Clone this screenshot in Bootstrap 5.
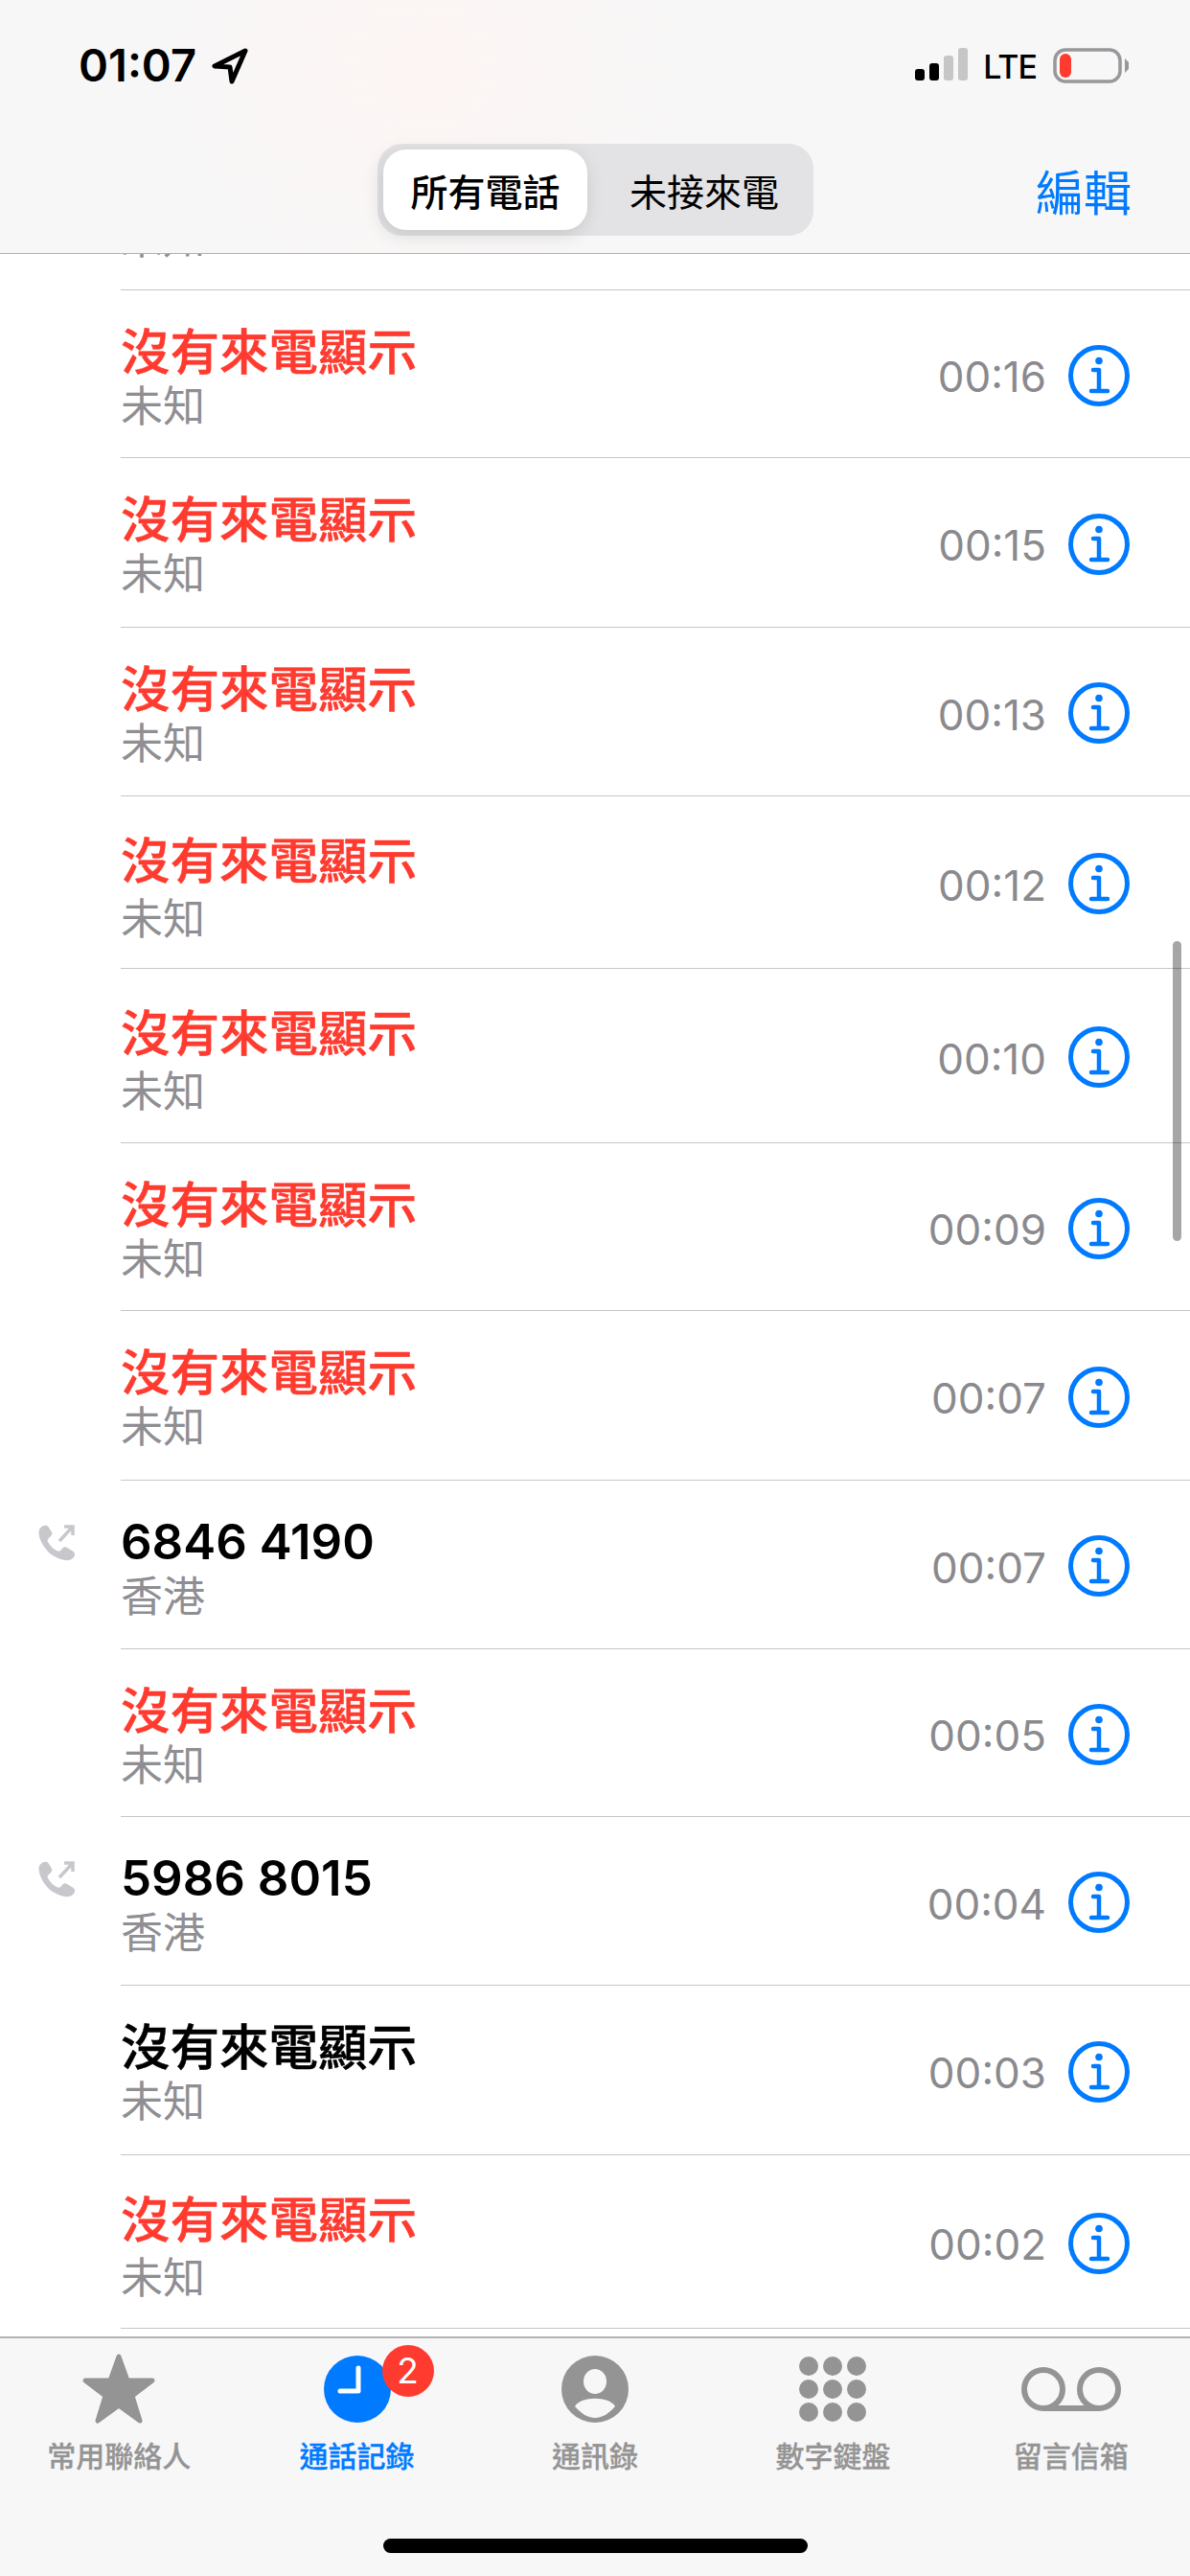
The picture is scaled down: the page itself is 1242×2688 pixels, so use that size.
<!DOCTYPE html>
<html lang="zh-Hant">
<head>
  <meta charset="UTF-8">
  <title>通話記錄</title>
  <link href="https://cdn.jsdelivr.net/npm/bootstrap@5.3.0/dist/css/bootstrap.min.css" rel="stylesheet">
  <style>
    html, body {
      width: 1242px;
      height: 2688px;
      overflow: hidden;
    }

    body {
      background: #fff;
      font-family: Inter, "Noto Sans CJK TC", sans-serif;
      color: #000;
    }

    .phone-screen {
      height: 2688px;
    }

    /* top bar */
    .top-bar {
      height: 265px;
      flex: none;
      background: radial-gradient(ellipse 300px 260px at 440px 70px, #fdf5f4, #f7f7f7 100%);
      border-bottom: 1px solid #b1b1b1;
    }

    .status-row {
      height: 150px;
      padding: 50px 63px 0 82px;
    }

    .clock-text {
      font-size: 47px;
      font-weight: 600;
      line-height: 36px;
    }

    .lte-text {
      font-size: 34px;
      font-weight: 500;
      line-height: 30px;
      letter-spacing: -1px;
      margin: 5px 17px 0 16px;
    }

    .seg-row {
      display: grid;
      grid-template-columns: 1fr auto 1fr;
      padding: 0 61px 0 62px;
    }

    .seg-box {
      width: 455px;
      height: 96px;
      padding: 6px;
      background: #e3e3e5;
      border-radius: 26px;
      font-size: 39px;
      font-family: "Noto Sans CJK TC", sans-serif;
    }

    .seg-item {
      height: 84px;
      color: #000;
      line-height: 84px;
      text-align: center;
    }

    .seg-on {
      width: 213px;
      background: #fff;
      border-radius: 24px;
      font-weight: 500;
      box-shadow: -2px 5px 20px rgba(0, 0, 0, .13);
    }

    .seg-off {
      flex: 1;
      padding-left: 14px;
    }

    .edit-link {
      justify-self: end;
      align-self: center;
      color: #007aff;
      font-family: "Noto Sans CJK TC", sans-serif;
      font-size: 50px;
      text-decoration: none;
      line-height: 60px;
    }

    /* call list */
    .call-list {
      flex: 1;
      min-height: 0;
      overflow: hidden;
    }

    .call-item {
      background: #fff;
      color: #000;
      border: 0;
      border-radius: 0 !important;
      padding: 0;
    }

    .call-item:first-child {
      margin-top: -137px;
    }

    .dir-slot {
      width: 126px;
      flex: none;
      padding: 46px 0 0 40px;
    }

    .call-body {
      border-bottom: 1px solid #c6c6c8;
      padding: 3px 63px 0 0;
      min-width: 0;
    }

    .call-text {
      margin-top: -3px;
    }

    .call-title {
      font-size: 51.5px;
      font-weight: 500;
      line-height: 60px;
      height: 91px;
      padding-top: 31px;
      -webkit-text-stroke: .5px currentColor;
      font-family: "Noto Sans CJK TC", sans-serif;
    }

    .call-title.is-missed {
      color: #ff3b30;
    }

    .call-title.is-number {
      font-family: Inter, sans-serif;
      font-weight: 600;
      font-size: 51px;
      padding-top: 34px;
      -webkit-text-stroke: 0;
    }

    .call-sub {
      font-size: 44px;
      line-height: 50px;
      margin-top: 2px;
      color: #8e8e93;
      font-family: "Noto Sans CJK TC", sans-serif;
    }

    .call-item.is-tall .call-title {
      height: 94px;
      padding-top: 34px;
    }

    .call-item.is-tall .call-sub {
      margin-top: 6px;
    }

    .call-time {
      font-size: 44px;
      line-height: 64px;
      padding-top: 3px;
      color: #8a8a8e;
      margin-right: 23px;
    }

    .scroll-thumb {
      top: 717px;
      right: 9px;
      width: 9px;
      height: 313px;
      border-radius: 5px;
      background: rgba(0, 0, 0, .35);
    }

    /* tab bar */
    .tab-bar {
      height: 250px;
      flex: none;
      background: #f7f7f8;
      border-top: 2px solid #b1b1b1;
    }

    .tab-col {
      padding-top: 14px;
      text-align: center;
      color: #949494;
    }

    .tab-col.is-active {
      color: #007aff;
    }

    .tab-icon {
      height: 78px;
    }

    .tab-label {
      font-size: 30px;
      font-weight: 500;
      line-height: 40px;
      margin-top: 9px;
      -webkit-text-stroke: .3px currentColor;
      font-family: "Noto Sans CJK TC", sans-serif;
    }

    .missed-count {
      top: -7px;
      left: 61px;
      width: 54px;
      height: 54px;
      border-radius: 50%;
      background: #ff3b30;
      color: #fff;
      font-size: 37px;
      line-height: 54px;
      text-align: center;
    }

    .home-bar {
      width: 443px;
      height: 15px;
      margin: 0 auto 24px;
      background: #000;
      border-radius: 8px;
    }
  </style>
</head>
<body>
  <div class="phone-screen d-flex flex-column">

    <header class="top-bar">
      <div class="status-row d-flex justify-content-between align-items-start">
        <div class="d-flex align-items-start">
          <span class="clock-text">01:07</span>
          <svg class="ms-3" width="38" height="38" viewBox="0 0 38 38">
            <path d="M35 3 L3 19 L19 20 L21 35 Z" fill="none" stroke="#000" stroke-width="5" stroke-linejoin="round"/>
          </svg>
        </div>
        <div class="d-flex align-items-start">
          <svg width="55" height="36" viewBox="0 0 55 36">
            <rect x="0" y="22" width="10" height="12" rx="3" fill="#000"/>
            <rect x="15" y="16" width="10" height="18" rx="3" fill="#000"/>
            <rect x="30" y="8" width="10" height="26" rx="3" fill="#c6c6c6"/>
            <rect x="45" y="0" width="10" height="34" rx="3" fill="#c6c6c6"/>
          </svg>
          <span class="lte-text">LTE</span>
          <svg width="80" height="38" viewBox="0 0 80 38">
            <rect x="2" y="2" width="68" height="33" rx="11" fill="none" stroke="#98989c" stroke-width="3.5"/>
            <rect x="7" y="6" width="12" height="25" rx="6" fill="#ff3b30"/>
            <path d="M75 11 L79 15 V22 L75 26 Z" fill="#98989c"/>
          </svg>
        </div>
      </div>
      <div class="seg-row">
        <div></div>
        <div class="seg-box d-flex">
          <div class="seg-item seg-on">所有電話</div>
          <div class="seg-item seg-off">未接來電</div>
        </div>
        <a class="edit-link" href="#">編輯</a>
      </div>
    </header>

    <div class="call-list position-relative">
      <ul class="list-group" id="calls"></ul>
      <div class="scroll-thumb position-absolute"></div>
    </div>

    <nav class="tab-bar d-flex flex-column">
      <div class="row g-0 flex-grow-1">
        <div class="col tab-col">
          <div class="tab-icon">
            <svg width="78" height="78" viewBox="0 0 78 78">
              <path d="M39 5 L48 30 L74 30 L53 46 L61 72 L39 56 L17 72 L25 46 L4 30 L30 30 Z" fill="#949494" stroke="#949494" stroke-width="5" stroke-linejoin="round"/>
            </svg>
          </div>
          <div class="tab-label">常用聯絡人</div>
        </div>
        <div class="col tab-col is-active">
          <div class="tab-icon d-flex justify-content-center">
            <div class="position-relative">
              <svg width="70" height="78" viewBox="0 0 70 78">
                <circle cx="35" cy="39" r="35" fill="#007aff"/>
                <path d="M36 17 V41 H17" fill="none" stroke="#fff" stroke-width="5" stroke-linecap="round" stroke-linejoin="round"/>
              </svg>
              <span class="missed-count position-absolute">2</span>
            </div>
          </div>
          <div class="tab-label">通話記錄</div>
        </div>
        <div class="col tab-col">
          <div class="tab-icon">
            <svg width="70" height="78" viewBox="0 0 70 78">
              <circle cx="35" cy="39" r="35" fill="#949494"/>
              <ellipse cx="35" cy="31" rx="12" ry="13" fill="#f7f7f8"/>
              <path d="M14 57 C20 46 50 46 56 57 C50 64 43 69 35 69 C27 69 20 64 14 57 Z" fill="#f7f7f8"/>
            </svg>
          </div>
          <div class="tab-label">通訊錄</div>
        </div>
        <div class="col tab-col">
          <div class="tab-icon">
            <svg width="72" height="78" viewBox="0 0 72 78">
              <g fill="#949494">
                <circle cx="11" cy="15" r="10"/><circle cx="36" cy="15" r="10"/><circle cx="61" cy="15" r="10"/>
                <circle cx="11" cy="39" r="10"/><circle cx="36" cy="39" r="10"/><circle cx="61" cy="39" r="10"/>
                <circle cx="11" cy="63" r="10"/><circle cx="36" cy="63" r="10"/><circle cx="61" cy="63" r="10"/>
              </g>
            </svg>
          </div>
          <div class="tab-label">數字鍵盤</div>
        </div>
        <div class="col tab-col">
          <div class="tab-icon">
            <svg width="104" height="78" viewBox="0 0 104 78">
              <g fill="none" stroke="#949494" stroke-width="6">
                <circle cx="23" cy="39" r="20"/>
                <circle cx="81" cy="39" r="20"/>
                <path d="M23 59 H81"/>
              </g>
            </svg>
          </div>
          <div class="tab-label">留言信箱</div>
        </div>
      </div>
      <div class="home-bar"></div>
    </nav>
  </div>

  <script>
    const unknown = "沒有來電顯示";
    // first row is scrolled under the top bar, only the bottom of its subtitle shows
    const calls = [
      { h: 175, title: "", sub: "未知", time: "" },
      { h: 175, title: unknown, sub: "未知", time: "00:16", missed: true },
      { h: 177, title: unknown, sub: "未知", time: "00:15", missed: true },
      { h: 176, title: unknown, sub: "未知", time: "00:13", missed: true },
      { h: 180, title: unknown, sub: "未知", time: "00:12", missed: true },
      { h: 182, title: unknown, sub: "未知", time: "00:10", missed: true },
      { h: 175, title: unknown, sub: "未知", time: "00:09", missed: true },
      { h: 177, title: unknown, sub: "未知", time: "00:07", missed: true },
      { h: 176, title: "6846 4190", sub: "香港", time: "00:07", out: true },
      { h: 175, title: unknown, sub: "未知", time: "00:05", missed: true },
      { h: 176, title: "5986 8015", sub: "香港", time: "00:04", out: true },
      { h: 177, title: unknown, sub: "未知", time: "00:03" },
      { h: 181, title: unknown, sub: "未知", time: "00:02", missed: true }
    ];

    const outIcon = `
      <svg width="38" height="38" viewBox="0 0 38 38">
        <path d="M9 1 C7 0 3 1 1 5 C-1 12 4 22 11 29 C17 34 26 38 32 37 C36 36 38 33 38 31 C38 29 37 28 35 27 L30 24 C28 23 26 23 25 25 L23 27 C22 28 21 28 19 27 C15 25 12 21 10 18 C9 16 10 15 11 14 L13 12 C14 11 15 9 14 8 L11 3 C10 2 10 1 9 1 Z" fill="#c7c7cc"/>
        <path d="M22 17 L36 2 M27 2 H36 V11" fill="none" stroke="#c7c7cc" stroke-width="3.5"/>
      </svg>`;

    const infoIcon = `
      <svg width="64" height="64" viewBox="0 0 64 64">
        <circle cx="32" cy="32" r="29.5" fill="none" stroke="#007aff" stroke-width="5"/>
        <circle cx="32" cy="16.5" r="3.8" fill="#007aff"/>
        <path d="M26 26 H32 V48 M24 48 H41" fill="none" stroke="#007aff" stroke-width="4.5" stroke-linecap="round" stroke-linejoin="round"/>
      </svg>`;

    const list = document.getElementById("calls");

    calls.forEach(call => {
      const item = document.createElement("li");
      item.className = "list-group-item call-item d-flex" + (call.h >= 180 ? " is-tall" : "");
      item.style.height = call.h + "px";

      const isNumber = /^\d/.test(call.title);
      const titleClass = (call.missed ? " is-missed" : "") + (isNumber ? " is-number" : "");

      item.innerHTML = `
        <div class="dir-slot">${call.out ? outIcon : ""}</div>
        <div class="call-body flex-grow-1 d-flex align-items-center">
          <div class="call-text flex-grow-1 align-self-start">
            <div class="call-title${titleClass}">${call.title}</div>
            <div class="call-sub">${call.sub}</div>
          </div>
          <span class="call-time">${call.time}</span>
          ${infoIcon}
        </div>
      `;

      list.appendChild(item);
    });
  </script>
  <script src="https://cdn.jsdelivr.net/npm/bootstrap@5.3.0/dist/js/bootstrap.bundle.min.js"></script>
</body>
</html>
